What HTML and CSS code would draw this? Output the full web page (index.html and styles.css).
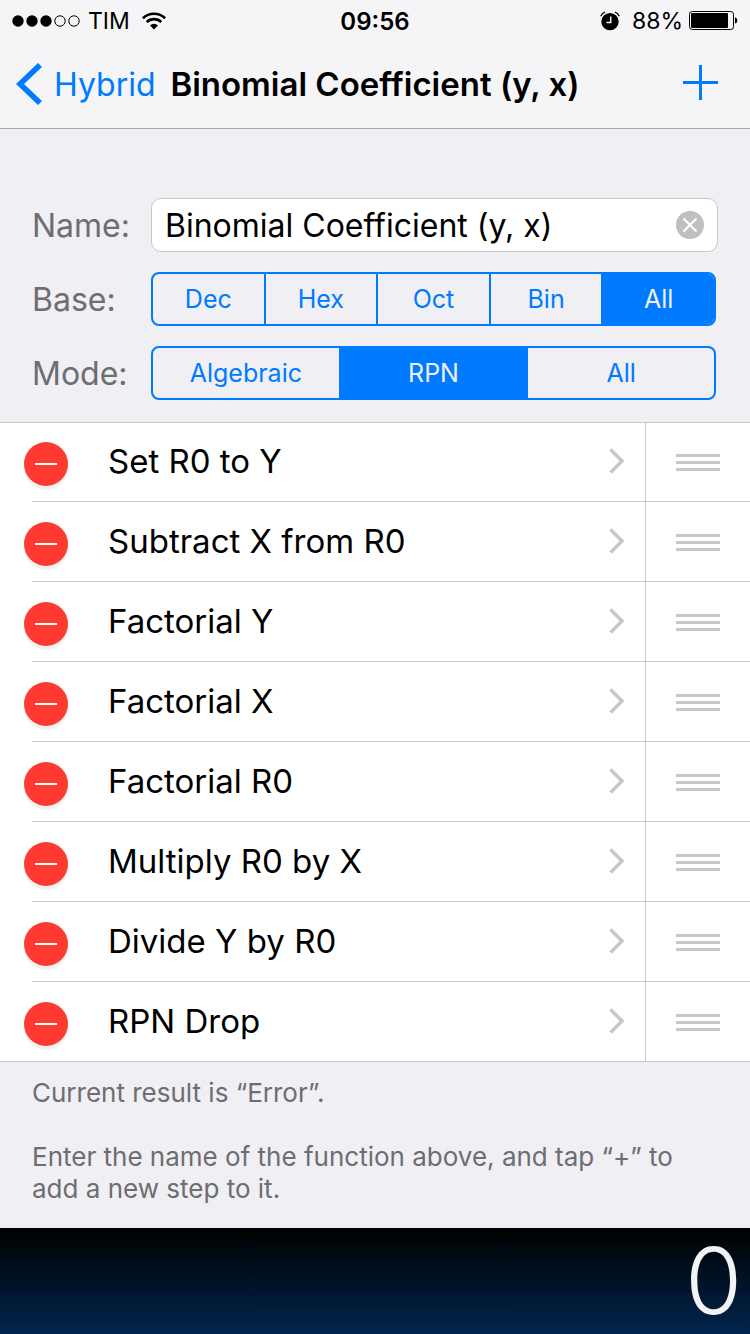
FILE: index.html
```html
<!DOCTYPE html>
<html lang="en">
<head>
<meta charset="utf-8">
<meta name="viewport" content="width=device-width, initial-scale=1">
<title>Binomial Coefficient (y, x)</title>
<link rel="stylesheet" href="styles.css">
</head>
<body>
<svg class="sprite" aria-hidden="true">
  <symbol id="chevron" viewBox="0 0 16 26"><path d="M1.5 1.5 13 13 1.5 24.5" fill="none" stroke="currentColor" stroke-width="3.6"/></symbol>
  <symbol id="grip" viewBox="0 0 44 17"><path d="M0 1.5H44M0 8.5H44M0 15.5H44" stroke="currentColor" stroke-width="3"/></symbol>
</svg>
<header class="top">
  <div class="status">
    <div class="status-left">
      <svg class="signal" viewBox="0 0 68 12" aria-label="Signal"><circle cx="6" cy="6" r="5.7"/><circle cx="20" cy="6" r="5.7"/><circle cx="34" cy="6" r="5.7"/><g fill="none" stroke="#000" stroke-width="1"><circle cx="48" cy="6" r="5.2"/><circle cx="62" cy="6" r="5.2"/></g></svg>
      <span>TIM</span>
      <svg class="wifi" viewBox="0 0 24 18" aria-label="Wi-Fi"><g fill="none" stroke="#000" stroke-width="2.6"><path d="M.9 6.2a16 16 0 0 1 22.2 0"/><path d="M4.7 10.1a10.5 10.5 0 0 1 14.6 0"/></g><path d="M8 13.4a5.8 5.8 0 0 1 8 0l-4 4z"/></svg>
    </div>
    <span class="clock">09:56</span>
    <div class="status-right">
      <svg class="alarm" viewBox="0 0 20 20" aria-label="Alarm"><circle cx="10" cy="10.6" r="8.7"/><path d="M.8 5.2A7 7 0 0 1 5 1.2M19.2 5.2A7 7 0 0 0 15 1.2" fill="none" stroke="#000" stroke-width="1.4"/><path d="M10.7 5.5v6H6.5" fill="none" stroke="#f5f5f7" stroke-width="1.5"/></svg>
      <span>88%</span>
      <svg class="battery" viewBox="0 0 49 20" aria-label="Battery"><rect x=".5" y=".5" width="44" height="18" rx="2.8" fill="none" stroke="#000"/><rect x="2" y="2" width="37" height="15" rx="1"/><path d="M46 6.5c3 0 3 6 0 6z"/></svg>
    </div>
  </div>
  <nav class="nav">
    <a class="back" href="#"><svg class="back-icon" viewBox="0 0 26 42"><path d="M24 2 4 21l20 19" fill="none" stroke="currentColor" stroke-width="5.6"/></svg>Hybrid</a>
    <h1 class="title">Binomial Coefficient (y, x)</h1>
    <button class="add" type="button" aria-label="Add step"><svg class="add-icon" viewBox="0 0 35 35"><path d="M17.5 0V35M0 17.5H35" stroke="currentColor" stroke-width="3"/></svg></button>
  </nav>
</header>
<main class="main">
  <form class="form">
    <label class="label" for="name">Name:</label>
    <div class="field">
      <input class="input" id="name" type="text" value="Binomial Coefficient (y, x)">
      <button class="clear" type="button" aria-label="Clear"><svg class="clear-icon" viewBox="0 0 28 28"><circle cx="14" cy="14" r="14" fill="#bfbfbf"/><path d="m7.5 7.5 13 13m0-13-13 13" stroke="#fff" stroke-width="2.4"/></svg></button>
    </div>
    <span class="label" id="base">Base:</span>
    <div class="segments" role="group" aria-labelledby="base">
      <button class="segment" type="button">Dec</button>
      <button class="segment" type="button">Hex</button>
      <button class="segment" type="button">Oct</button>
      <button class="segment" type="button">Bin</button>
      <button class="segment selected" type="button" aria-pressed="true">All</button>
    </div>
    <span class="label" id="mode">Mode:</span>
    <div class="segments" role="group" aria-labelledby="mode">
      <button class="segment" type="button">Algebraic</button>
      <button class="segment selected" type="button" aria-pressed="true">RPN</button>
      <button class="segment" type="button">All</button>
    </div>
  </form>
  <ol class="steps">
    <li class="step"><button class="remove" type="button" aria-label="Remove"></button><a class="step-link" href="#">Set R0 to Y<svg class="chevron"><use href="#chevron"/></svg></a><button class="handle" type="button" aria-label="Reorder"><svg class="grip"><use href="#grip"/></svg></button></li>
    <li class="step"><button class="remove" type="button" aria-label="Remove"></button><a class="step-link" href="#">Subtract X from R0<svg class="chevron"><use href="#chevron"/></svg></a><button class="handle" type="button" aria-label="Reorder"><svg class="grip"><use href="#grip"/></svg></button></li>
    <li class="step"><button class="remove" type="button" aria-label="Remove"></button><a class="step-link" href="#">Factorial Y<svg class="chevron"><use href="#chevron"/></svg></a><button class="handle" type="button" aria-label="Reorder"><svg class="grip"><use href="#grip"/></svg></button></li>
    <li class="step"><button class="remove" type="button" aria-label="Remove"></button><a class="step-link" href="#">Factorial X<svg class="chevron"><use href="#chevron"/></svg></a><button class="handle" type="button" aria-label="Reorder"><svg class="grip"><use href="#grip"/></svg></button></li>
    <li class="step"><button class="remove" type="button" aria-label="Remove"></button><a class="step-link" href="#">Factorial R0<svg class="chevron"><use href="#chevron"/></svg></a><button class="handle" type="button" aria-label="Reorder"><svg class="grip"><use href="#grip"/></svg></button></li>
    <li class="step"><button class="remove" type="button" aria-label="Remove"></button><a class="step-link" href="#">Multiply R0 by X<svg class="chevron"><use href="#chevron"/></svg></a><button class="handle" type="button" aria-label="Reorder"><svg class="grip"><use href="#grip"/></svg></button></li>
    <li class="step"><button class="remove" type="button" aria-label="Remove"></button><a class="step-link" href="#">Divide Y by R0<svg class="chevron"><use href="#chevron"/></svg></a><button class="handle" type="button" aria-label="Reorder"><svg class="grip"><use href="#grip"/></svg></button></li>
    <li class="step"><button class="remove" type="button" aria-label="Remove"></button><a class="step-link" href="#">RPN Drop<svg class="chevron"><use href="#chevron"/></svg></a><button class="handle" type="button" aria-label="Reorder"><svg class="grip"><use href="#grip"/></svg></button></li>
  </ol>
  <div class="notes">
    <p class="note">Current result is “Error”.</p>
    <p class="note">Enter the name of the function above, and tap “+” to add a new step to it.</p>
  </div>
</main>
<footer class="result"><output>0</output></footer>
</body>
</html>
```

FILE: styles.css
```css
* { box-sizing: border-box; }
body {
  margin: 0;
  min-height: 100vh;
  display: flex;
  flex-direction: column;
  background: #efeff4;
  color: #000;
  font-family: Inter, "Liberation Sans", sans-serif;
  font-size: 32px;
}
button { margin: 0; padding: 0; border: 0; background: none; font: inherit; color: inherit; }
a { color: inherit; text-decoration: none; }
svg { display: block; flex: none; }
.sprite { position: absolute; width: 0; height: 0; }

.top { background: #f5f5f7; border-bottom: 1px solid #a7a7ab; }
.status {
  height: 40px;
  padding: 2px 12px 0;
  display: grid;
  grid-template-columns: 1fr auto 1fr;
  align-items: center;
  font-size: 23px;
}
.status-left, .status-right { display: flex; align-items: center; gap: 8px; }
.status-right { justify-content: flex-end; gap: 6px; }
.signal { width: 68px; height: 12px; }
.wifi { width: 24px; height: 18px; margin-left: 4px; }
.clock { font-size: 24px; font-weight: 600; }
.alarm { width: 20px; height: 20px; margin-right: 6px; }
.battery { width: 49px; height: 20px; }
.nav {
  height: 88px;
  padding: 0 16px;
  display: grid;
  grid-template-columns: 1fr auto 1fr;
  align-items: center;
}
.back { display: flex; align-items: center; gap: 12px; color: #007aff; }
.back-icon { width: 26px; height: 42px; }
.title { margin: 0; font-size: 33px; font-weight: 600; white-space: nowrap; }
.add { justify-self: end; color: #007aff; padding: 0 16px 4px 0; }
.add-icon { width: 35px; height: 35px; }

.main { flex: 1; }
.form {
  padding: 69px 32px 22px;
  display: grid;
  grid-template-columns: 99px 1fr;
  column-gap: 20px;
  row-gap: 20px;
  align-items: center;
}
.label { color: #6d6d72; white-space: nowrap; }
.field {
  height: 54px;
  padding: 0 13px;
  display: flex;
  align-items: center;
  background: #fff;
  border: 1px solid #c8c7cc;
  border-radius: 10px;
}
.input {
  flex: 1;
  min-width: 0;
  padding: 0;
  border: 0;
  outline: 0;
  background: none;
  font: inherit;
  color: #000;
}
.clear-icon { width: 28px; height: 28px; }
.segments {
  height: 54px;
  margin-right: 2px;
  display: flex;
  border: 2px solid #007aff;
  border-radius: 8px;
  overflow: hidden;
  color: #007aff;
  font-size: 25px;
}
.segment { flex: 1; }
.segment + .segment { border-left: 2px solid #007aff; }
.selected { background: #007aff; color: #efeff4; }

.steps {
  margin: 0;
  padding: 0;
  list-style: none;
  background: linear-gradient(#c8c7cc, #c8c7cc) 0 0 / 100% 1px no-repeat #fff;
  font-size: 33px;
}
.step {
  height: 80px;
  padding-left: 24px;
  display: flex;
  align-items: center;
  background: linear-gradient(#c8c7cc, #c8c7cc) 32px 100% / 100% 1px no-repeat;
}
.step:last-child { background-position: 0 100%; }
.remove {
  flex: none;
  width: 44px;
  height: 44px;
  margin-top: 4px;
  border-radius: 50%;
  background: linear-gradient(#fff, #fff) center / 22px 2px no-repeat #ff3b30;
  box-shadow: 0 4px 2px #f1f1f2;
}
.step-link {
  flex: 1;
  padding: 0 20px 2px 40px;
  display: flex;
  align-items: center;
  justify-content: space-between;
}
.chevron { width: 16px; height: 26px; color: #c7c7cc; }
.handle {
  align-self: stretch;
  width: 105px;
  border-left: 1px solid #c8c7cc;
  display: flex;
  align-items: center;
  justify-content: center;
  color: #c7c7cc;
}
.grip { width: 44px; height: 17px; }

.notes {
  padding: 15px 32px 23px;
  display: grid;
  gap: 32px;
  color: #6d6d72;
  font-size: 26px;
  line-height: 32px;
}
.note { margin: 0; }

.result {
  height: 106px;
  padding: 0 8px;
  display: flex;
  align-items: center;
  justify-content: flex-end;
  background: linear-gradient(#000, #00254d);
  color: #f2f3f5;
  font-size: 92px;
  font-weight: 300;
  line-height: 1;
}
```
